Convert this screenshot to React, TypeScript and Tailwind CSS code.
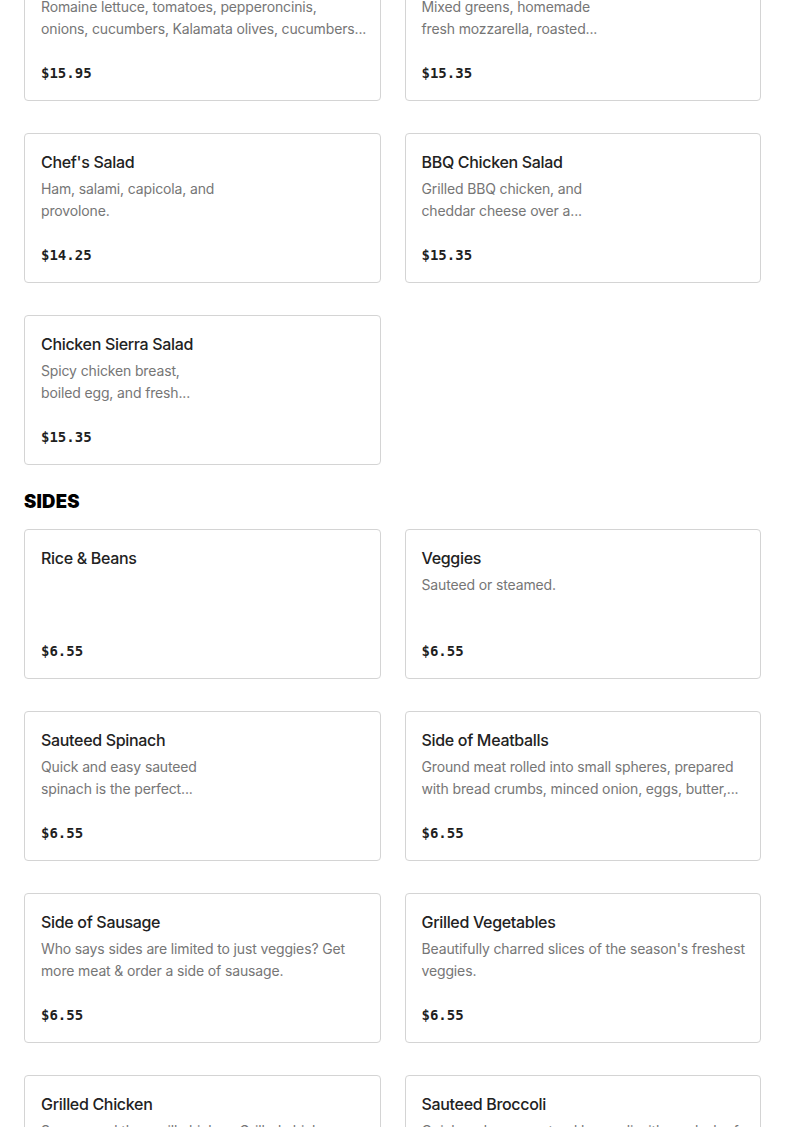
const SALADS = [
  {
    name: "Greek Salad",
    lines: ["Romaine lettuce, tomatoes, pepperoncinis,", "onions, cucumbers, Kalamata olives, cucumbers..."],
    price: "$15.95",
  },
  {
    name: "Caprese Salad",
    lines: ["Mixed greens, homemade", "fresh mozzarella, roasted..."],
    price: "$15.35",
  },
  { name: "Chef's Salad", lines: ["Ham, salami, capicola, and", "provolone."], price: "$14.25" },
  { name: "BBQ Chicken Salad", lines: ["Grilled BBQ chicken, and", "cheddar cheese over a..."], price: "$15.35" },
  { name: "Chicken Sierra Salad", lines: ["Spicy chicken breast,", "boiled egg, and fresh..."], price: "$15.35" },
];

const SIDES = [
  { name: "Rice & Beans", lines: [], price: "$6.55" },
  { name: "Veggies", lines: ["Sauteed or steamed."], price: "$6.55" },
  { name: "Sauteed Spinach", lines: ["Quick and easy sauteed", "spinach is the perfect..."], price: "$6.55" },
  {
    name: "Side of Meatballs",
    lines: ["Ground meat rolled into small spheres, prepared", "with bread crumbs, minced onion, eggs, butter,..."],
    price: "$6.55",
  },
  {
    name: "Side of Sausage",
    lines: ["Who says sides are limited to just veggies? Get", "more meat & order a side of sausage."],
    price: "$6.55",
  },
  {
    name: "Grilled Vegetables",
    lines: ["Beautifully charred slices of the season's freshest", "veggies."],
    price: "$6.55",
  },
  {
    name: "Grilled Chicken",
    lines: ["Season and then grill chicken. Grilled chicken", "breast is a lean and easy side."],
    price: "$6.55",
  },
  {
    name: "Sauteed Broccoli",
    lines: ["Quick and easy sauteed broccoli with a splash of", "garlic and olive oil."],
    price: "$6.55",
  },
];

type Item = { name: string; lines: string[]; price: string };

function MenuCard({ name, lines, price }: Item) {
  return (
    <div className="flex h-[150px] flex-col rounded-[4px] border border-[#d4d4d4] bg-white px-4 pt-4 pb-[17px]">
      <h3
        className="text-[16px] leading-6 font-medium tracking-[-0.02em] text-[#222222]"
        style={{ fontFamily: "Inter, 'Noto Sans', sans-serif" }}
      >
        {name}
      </h3>
      <p
        className="mt-1 text-[14px] leading-[22px] tracking-[-0.01em] text-[#767676]"
        style={{ fontFamily: "Inter, 'Noto Sans', sans-serif" }}
      >
        {lines.map((line) => (
          <span key={line} className="block whitespace-nowrap">
            {line}
          </span>
        ))}
      </p>
      <div
        className="mt-auto text-[14px] leading-5 font-bold text-[#1f1f1f]"
        style={{ fontFamily: "'DejaVu Sans Mono', monospace" }}
      >
        {price}
      </div>
    </div>
  );
}

export default function App() {
  return (
    <div className="min-h-screen overflow-hidden bg-white">
      <div className="mt-[-49px] px-6">
        <div className="grid grid-cols-2 gap-x-6 gap-y-8">
          {SALADS.map((item) => (
            <MenuCard key={item.name} {...item} />
          ))}
        </div>

        <h2
          className="mt-6 mb-4 text-[18.5px] leading-6 font-black tracking-[0.01em] text-black"
          style={{ fontFamily: "Inter, 'Liberation Sans', sans-serif" }}
        >
          SIDES
        </h2>

        <div className="grid grid-cols-2 gap-x-6 gap-y-8 pb-10">
          {SIDES.map((item) => (
            <MenuCard key={item.name} {...item} />
          ))}
        </div>
      </div>
    </div>
  );
}
